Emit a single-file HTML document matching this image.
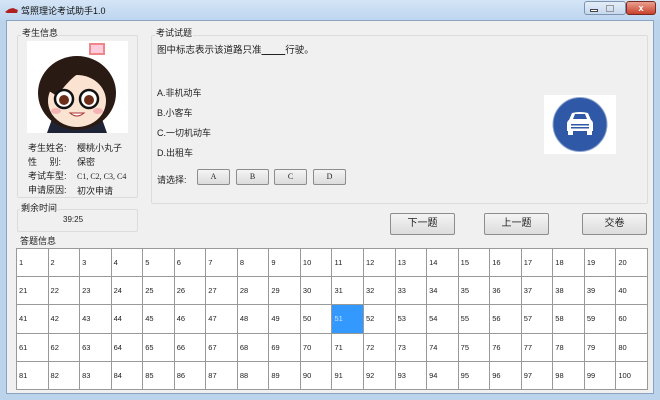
<!DOCTYPE html>
<html><head><meta charset="utf-8"><style>
*{margin:0;padding:0;box-sizing:border-box}
body{width:660px;height:400px;overflow:hidden;background:#bcd3ec;font-family:"Liberation Sans","Noto Sans CJK SC",sans-serif;font-size:9px;color:#222;position:relative}
.a{position:absolute}
#title{left:0;top:0;width:660px;height:21px;background:linear-gradient(#d4e5f6,#bcd5ef)}
#client{left:6px;top:20px;width:648px;height:374px;background:#f0f0f0;border:1px solid #8aa3c0}
.grp{position:absolute;border:1px solid #dcdcdc;border-radius:2px}
.lbl{position:absolute;background:#f0f0f0;font-size:9px;line-height:11px;padding:0 1px}
.btn{position:absolute;border:1px solid #8d8d8d;border-radius:2px;background:linear-gradient(#f4f4f4,#dcdcdc);text-align:center;font-size:9px}
table{position:absolute;left:16px;top:248px;width:632px;height:142px;border-collapse:collapse;table-layout:fixed;background:#fff;border:1px solid #222}
td{border:1px solid #999;font-size:7.5px;padding-left:2px;vertical-align:middle;height:28px;color:#222}
td.s{background:#3399ff;color:#cfe6ff}
</style></head><body>
<div id="title" class="a">
 <svg class="a" style="left:5px;top:6px" width="14" height="8"><path d="M0 6 L4 3 L8 2 L13 4 L12 7 L2 7Z" fill="#b02020"/></svg>
 <div class="a" style="left:21px;top:4px;font-size:9px;color:#111">驾照理论考试助手1.0</div>
 <div class="a" style="left:584px;top:1px;width:42px;height:14px;border:1px solid #7e93ad;border-radius:3px;background:linear-gradient(#e4eef9,#c6d8ee)"></div>
 <div class="a" style="left:590px;top:9px;width:8px;height:3px;border:1px solid #444;background:#fff"></div>
 <div class="a" style="left:606px;top:5px;width:8px;height:7px;border:1px solid #999"></div>
 <div class="a" style="left:626px;top:1px;width:30px;height:14px;border:1px solid #7a2a20;border-radius:3px;background:linear-gradient(#e9a190,#c8412c);color:#fff;font-size:9px;text-align:center;line-height:12px;font-weight:bold">x</div>
</div>
<div id="client" class="a"></div>

<div class="grp" style="left:17px;top:35px;width:121px;height:163px"></div>
<div class="lbl" style="left:21px;top:28px">考生信息</div>
<svg class="a" style="left:27px;top:41px" width="101" height="92" viewBox="0 0 101 92">
 <rect width="101" height="92" fill="#fff"/>
 <path d="M20 92 L25 78 L75 78 L80 92Z" fill="#1e2436"/>
 <ellipse cx="50" cy="52" rx="39" ry="37" fill="#2a1a14"/>
 <ellipse cx="50" cy="60" rx="29" ry="26" fill="#fbe3d2"/>
 <path d="M14 45 Q30 15 62 28 Q48 30 30 55Z" fill="#2a1a14"/>
 <circle cx="37" cy="58" r="9" fill="#fff" stroke="#111" stroke-width="2.5"/>
 <circle cx="62" cy="58" r="9" fill="#fff" stroke="#111" stroke-width="2.5"/>
 <circle cx="37" cy="59" r="5" fill="#6b2c18"/><circle cx="62" cy="59" r="5" fill="#6b2c18"/>
 <ellipse cx="29" cy="70" rx="5" ry="3" fill="#f4b4b4"/><ellipse cx="71" cy="70" rx="5" ry="3" fill="#f4b4b4"/>
 <path d="M43 72 Q50 78 57 72Z" fill="#fff" stroke="#a33" stroke-width="1"/>
 <rect x="62" y="2" width="16" height="12" fill="#e88" /><rect x="64" y="4" width="12" height="8" fill="#fcd"/>
</svg>
<div class="a" style="left:28px;top:141px;line-height:14px">考生姓名:<br>性&nbsp;&nbsp;&nbsp;&nbsp;&nbsp;别:<br>考试车型:<br>申请原因:</div>
<div class="a" style="left:77px;top:141px;line-height:14px">樱桃小丸子<br>保密<br><span style="font-family:'Liberation Serif';font-size:8px">C1, C2, C3, C4</span><br>初次申请</div>

<div class="grp" style="left:17px;top:209px;width:121px;height:23px"></div>
<div class="lbl" style="left:20px;top:203px">剩余时间</div>
<div class="a" style="left:63px;top:215px;font-size:8px">39:25</div>

<div class="grp" style="left:151px;top:35px;width:497px;height:169px"></div>
<div class="lbl" style="left:155px;top:28px">考试试题</div>
<div class="a" style="left:157px;top:42px;font-size:9.5px">图中标志表示该道路只准<u>&nbsp;&nbsp;&nbsp;&nbsp;&nbsp;&nbsp;&nbsp;&nbsp;&nbsp;</u>行驶。</div>
<div class="a" style="left:157px;top:86px">A.非机动车</div>
<div class="a" style="left:157px;top:106px">B.小客车</div>
<div class="a" style="left:157px;top:126px">C.一切机动车</div>
<div class="a" style="left:157px;top:146px">D.出租车</div>
<div class="a" style="left:157px;top:173px">请选择:</div>
<div class="btn" style="left:197px;top:169px;width:33px;height:16px;line-height:14px;font-family:'Liberation Serif';font-size:8px">A</div>
<div class="btn" style="left:236px;top:169px;width:33px;height:16px;line-height:14px;font-family:'Liberation Serif';font-size:8px">B</div>
<div class="btn" style="left:274px;top:169px;width:33px;height:16px;line-height:14px;font-family:'Liberation Serif';font-size:8px">C</div>
<div class="btn" style="left:313px;top:169px;width:33px;height:16px;line-height:14px;font-family:'Liberation Serif';font-size:8px">D</div>

<svg class="a" style="left:544px;top:95px" width="72" height="59" viewBox="0 0 72 59">
 <rect width="72" height="59" fill="#fff"/>
 <circle cx="36" cy="29.5" r="27" fill="#2f59a6" stroke="#8fa6cf" stroke-width="1"/>
 <path d="M25 25 L28 18 Q36 16 44 18 L47 25 Q49 26 49 29 L49 36 L23 36 L23 29 Q23 26 25 25Z" fill="#fff"/>
 <rect x="24" y="35" width="5" height="5" fill="#fff"/><rect x="43" y="35" width="5" height="5" fill="#fff"/>
 <path d="M29 24 L31 19 L41 19 L43 24Z" fill="#2f59a6"/>
 <rect x="27" y="29" width="18" height="1.5" fill="#2f59a6"/><rect x="27" y="32" width="18" height="1.5" fill="#2f59a6"/>
</svg>

<div class="btn" style="left:390px;top:213px;width:65px;height:22px;line-height:20px;font-size:10px">下一题</div>
<div class="btn" style="left:484px;top:213px;width:65px;height:22px;line-height:20px;font-size:10px">上一题</div>
<div class="btn" style="left:582px;top:213px;width:65px;height:22px;line-height:20px;font-size:10px">交卷</div>

<div class="lbl" style="left:19px;top:236px">答题信息</div>
<table>
<tr><td>1</td><td>2</td><td>3</td><td>4</td><td>5</td><td>6</td><td>7</td><td>8</td><td>9</td><td>10</td><td>11</td><td>12</td><td>13</td><td>14</td><td>15</td><td>16</td><td>17</td><td>18</td><td>19</td><td>20</td></tr>
<tr><td>21</td><td>22</td><td>23</td><td>24</td><td>25</td><td>26</td><td>27</td><td>28</td><td>29</td><td>30</td><td>31</td><td>32</td><td>33</td><td>34</td><td>35</td><td>36</td><td>37</td><td>38</td><td>39</td><td>40</td></tr>
<tr><td>41</td><td>42</td><td>43</td><td>44</td><td>45</td><td>46</td><td>47</td><td>48</td><td>49</td><td>50</td><td class="s">51</td><td>52</td><td>53</td><td>54</td><td>55</td><td>56</td><td>57</td><td>58</td><td>59</td><td>60</td></tr>
<tr><td>61</td><td>62</td><td>63</td><td>64</td><td>65</td><td>66</td><td>67</td><td>68</td><td>69</td><td>70</td><td>71</td><td>72</td><td>73</td><td>74</td><td>75</td><td>76</td><td>77</td><td>78</td><td>79</td><td>80</td></tr>
<tr><td>81</td><td>82</td><td>83</td><td>84</td><td>85</td><td>86</td><td>87</td><td>88</td><td>89</td><td>90</td><td>91</td><td>92</td><td>93</td><td>94</td><td>95</td><td>96</td><td>97</td><td>98</td><td>99</td><td>100</td></tr>
</table>
</body></html>
